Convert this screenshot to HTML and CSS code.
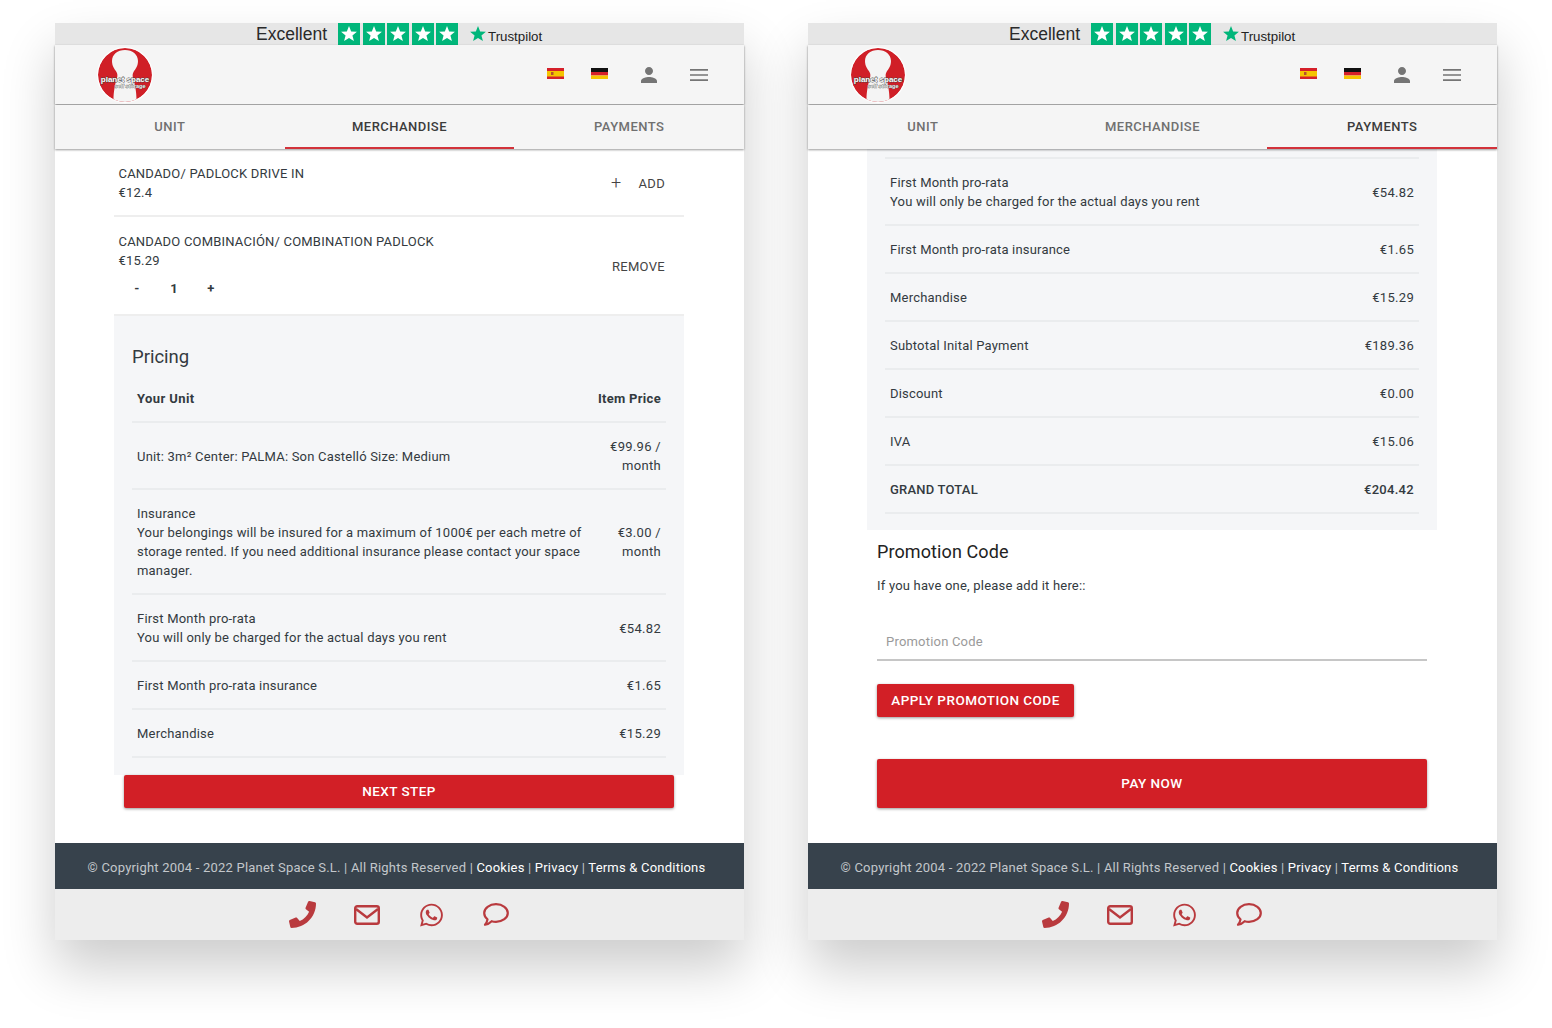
FILE: index.html
```html
<!DOCTYPE html>
<html lang="en">
<head>
    <meta charset="UTF-8">
    <meta name="viewport" content="width=device-width, initial-scale=1.0">
    <title>Planet Space checkout</title>
    <link rel="stylesheet" href="styles.css">
</head>
<body>

    <!-- Shared icons -->
    <svg class="sprite" aria-hidden="true">
        <symbol id="tp-star" viewBox="0 0 24 24"><polygon points="12,2.5 14.6,9 21.5,9.3 16.1,13.7 17.9,20.5 12,16.7 6.1,20.5 7.9,13.7 2.5,9.3 9.4,9"/></symbol>
        <symbol id="logo" viewBox="0 0 54 54">
            <circle cx="27" cy="27" r="27" fill="#d01f27"/>
            <path d="M27 2c7.500 0 13 4.500 13 11 0 5-2.500 8-4.500 11-1.500 2.500-1 5 .5 9 1 4 2.500 11 2.500 18.500-3.500 1.600-7.500 2.500-11.500 2.500s-8-.9-11.500-2.500c0-7.500 1.500-14.500 2.500-18.500 1.500-4 2-6.500 .5-9-2-3-4.500-6-4.500-11 0-6.500 5.500-11 13-11z" fill="#f4f4f4"/>
            <text class="logo-name" x="27" y="33.500" text-anchor="middle">planet space</text>
            <text class="logo-sub" x="32" y="40" text-anchor="middle">self storage</text>
        </symbol>
        <symbol id="flag-es" viewBox="0 0 17 11">
            <rect width="17" height="11" fill="#d5202a"/><rect y="3" width="17" height="5.500" fill="#f5c400"/><rect x="4" y="4" width="2.500" height="3" fill="#b5502a"/>
        </symbol>
        <symbol id="flag-de" viewBox="0 0 17 11">
            <rect width="17" height="4" fill="#111"/><rect y="4" width="17" height="3.500" fill="#d5202a"/><rect y="7.500" width="17" height="3.500" fill="#f5c400"/>
        </symbol>
        <symbol id="person" viewBox="0 0 24 24"><path d="M12 12c2.210 0 4-1.790 4-4s-1.790-4-4-4-4 1.790-4 4 1.790 4 4 4zm0 2c-2.670 0-8 1.340-8 4v2h16v-2c0-2.660-5.330-4-8-4z"/></symbol>
        <symbol id="menu" viewBox="0 0 24 24"><path d="M3 18h18v-1.700H3V18zm0-5.150h18v-1.700H3v1.700zM3 6v1.700h18V6H3z"/></symbol>
        <symbol id="phone" viewBox="0 0 512 512"><path d="M493.400 24.600l-104-24c-11.300-2.600-22.900 3.300-27.500 13.900l-48 112c-4.200 9.800-1.400 21.300 6.900 28l60.600 49.600c-36 76.700-98.900 140.500-177.200 177.200l-49.600-60.600c-6.800-8.300-18.200-11.100-28-6.900l-112 48C3.900 366.500-2 378.100.6 389.400l24 104C27.100 504.200 36.700 512 48 512c256.100 0 464-207.500 464-464 0-11.200-7.700-20.900-18.600-23.400z"/></symbol>
        <symbol id="mail" viewBox="0 0 26 20"><rect x="1.200" y="1.200" width="23.600" height="17.600" rx="2" fill="none" stroke="currentColor" stroke-width="2.400"/><path d="M2 4l11 8.500L24 4" fill="none" stroke="currentColor" stroke-width="2.400"/></symbol>
        <symbol id="whatsapp" viewBox="0 0 448 512"><path d="M380.900 97.100C339 55.100 283.200 32 223.900 32c-122.400 0-222 99.600-222 222 0 39.100 10.200 77.300 29.600 111L0 480l117.700-30.900c32.400 17.700 68.900 27 106.100 27h.1c122.300 0 224.100-99.600 224.100-222 0-59.300-25.200-115-67.100-157zm-157 341.600c-33.200 0-65.700-8.900-94-25.700l-6.700-4-69.800 18.300L72 359.200l-4.400-7c-18.500-29.400-28.200-63.300-28.200-98.200 0-101.700 82.800-184.500 184.600-184.500 49.300 0 95.600 19.200 130.400 54.100 34.800 34.900 56.200 81.200 56.100 130.500 0 101.800-84.900 184.600-186.600 184.600zm101.200-138.200c-5.500-2.800-32.800-16.200-37.900-18-5.100-1.900-8.800-2.800-12.500 2.800-3.700 5.600-14.300 18-17.600 21.800-3.200 3.700-6.500 4.200-12 1.400-32.600-16.300-54-29.100-75.500-66-5.700-9.800 5.700-9.100 16.300-30.300 1.800-3.700.9-6.900-.5-9.700-1.400-2.800-12.500-30.100-17.100-41.200-4.500-10.800-9.100-9.300-12.500-9.500-3.200-.2-6.900-.2-10.600-.2-3.700 0-9.700 1.400-14.800 6.900-5.100 5.600-19.400 19-19.400 46.300 0 27.300 19.900 53.700 22.600 57.400 2.800 3.700 39.100 59.700 94.800 83.800 35.200 15.200 49 16.500 66.600 13.900 10.700-1.600 32.800-13.400 37.400-26.400 4.600-13 4.600-24.100 3.200-26.400-1.300-2.500-5-3.900-10.500-6.600z"/></symbol>
        <symbol id="comment" viewBox="0 0 26 23"><path d="M13 1.200c6.600 0 11.800 3.900 11.800 8.800S19.600 18.800 13 18.800c-1.500 0-3-.2-4.300-.6-1.500 1.500-3.600 3-6.700 3.500 1.300-1.500 2.200-3.300 2.500-5.400C2.500 14.700 1.200 12.500 1.200 10 1.200 5.100 6.400 1.200 13 1.200z" fill="none" stroke="currentColor" stroke-width="2.200" stroke-linejoin="round"/></symbol>
    </svg>

    <div class="desktop">

        <!-- Merchandise step -->
        <section class="screen">
            <div class="trust-bar">
                <span class="trust-word">Excellent</span>
                <span class="trust-stars">
                    <span class="trust-box"><svg><use href="#tp-star"/></svg></span>
                    <span class="trust-box"><svg><use href="#tp-star"/></svg></span>
                    <span class="trust-box"><svg><use href="#tp-star"/></svg></span>
                    <span class="trust-box"><svg><use href="#tp-star"/></svg></span>
                    <span class="trust-box"><svg><use href="#tp-star"/></svg></span>
                </span>
                <span class="trust-brand"><svg class="trust-mark"><use href="#tp-star"/></svg>Trustpilot</span>
            </div>
            <header class="top-bar">
                <svg class="logo"><use href="#logo"/></svg>
                <div class="top-actions">
                    <span class="flag-btn"><svg class="flag"><use href="#flag-es"/></svg></span>
                    <span class="flag-btn"><svg class="flag"><use href="#flag-de"/></svg></span>
                    <span class="icon-btn first"><svg class="top-icon"><use href="#person"/></svg></span>
                    <span class="icon-btn"><svg class="top-icon"><use href="#menu"/></svg></span>
                </div>
            </header>
            <nav class="tabs">
                <span class="tab">UNIT</span>
                <span class="tab active">MERCHANDISE</span>
                <span class="tab">PAYMENTS</span>
            </nav>
            <main class="content">
                <div class="product">
                    <div>
                        <div>CANDADO/ PADLOCK DRIVE IN</div>
                        <div>€12.4</div>
                    </div>
                    <div class="product-action"><span class="plus">+</span>ADD</div>
                </div>
                <div class="product product-last">
                    <div>
                        <div>CANDADO COMBINACIÓN/ COMBINATION PADLOCK</div>
                        <div>€15.29</div>
                        <div class="qty"><span>-</span><span>1</span><span>+</span></div>
                    </div>
                    <div class="product-action">REMOVE</div>
                </div>
                <div class="pricing">
                    <h2 class="pricing-title">Pricing</h2>
                    <div class="price-row head"><div class="price-label">Your Unit</div><div class="price-value wide">Item Price</div></div>
                    <div class="price-row"><div class="price-label">Unit: 3m² Center: PALMA: Son Castelló Size: Medium</div><div class="price-value">€99.96 / month</div></div>
                    <div class="price-row"><div class="price-label">Insurance<br>Your belongings will be insured for a maximum of 1000€ per each metre of storage rented. If you need additional insurance please contact your space manager.</div><div class="price-value">€3.00 / month</div></div>
                    <div class="price-row"><div class="price-label">First Month pro-rata<br>You will only be charged for the actual days you rent</div><div class="price-value">€54.82</div></div>
                    <div class="price-row"><div class="price-label">First Month pro-rata insurance</div><div class="price-value">€1.65</div></div>
                    <div class="price-row"><div class="price-label">Merchandise</div><div class="price-value">€15.29</div></div>
                </div>
                <div class="next-wrap"><button class="btn btn-next">NEXT STEP</button></div>
            </main>
            <footer class="legal">© Copyright 2004 - 2022 Planet Space S.L. | All Rights Reserved | <a>Cookies</a> | <a>Privacy</a> | <a>Terms &amp; Conditions</a></footer>
            <div class="contact-bar">
                <span class="contact-item"><svg class="ic-phone"><use href="#phone"/></svg></span>
                <span class="contact-item"><svg class="ic-mail"><use href="#mail"/></svg></span>
                <span class="contact-item"><svg class="ic-whatsapp"><use href="#whatsapp"/></svg></span>
                <span class="contact-item"><svg class="ic-comment"><use href="#comment"/></svg></span>
            </div>
        </section>

        <!-- Payments step -->
        <section class="screen">
            <div class="trust-bar">
                <span class="trust-word">Excellent</span>
                <span class="trust-stars">
                    <span class="trust-box"><svg><use href="#tp-star"/></svg></span>
                    <span class="trust-box"><svg><use href="#tp-star"/></svg></span>
                    <span class="trust-box"><svg><use href="#tp-star"/></svg></span>
                    <span class="trust-box"><svg><use href="#tp-star"/></svg></span>
                    <span class="trust-box"><svg><use href="#tp-star"/></svg></span>
                </span>
                <span class="trust-brand"><svg class="trust-mark"><use href="#tp-star"/></svg>Trustpilot</span>
            </div>
            <header class="top-bar">
                <svg class="logo"><use href="#logo"/></svg>
                <div class="top-actions">
                    <span class="flag-btn"><svg class="flag"><use href="#flag-es"/></svg></span>
                    <span class="flag-btn"><svg class="flag"><use href="#flag-de"/></svg></span>
                    <span class="icon-btn first"><svg class="top-icon"><use href="#person"/></svg></span>
                    <span class="icon-btn"><svg class="top-icon"><use href="#menu"/></svg></span>
                </div>
            </header>
            <nav class="tabs">
                <span class="tab">UNIT</span>
                <span class="tab">MERCHANDISE</span>
                <span class="tab active">PAYMENTS</span>
            </nav>
            <main class="content">
                <div class="pricing pricing-scrolled">
                    <div class="price-row top-line"><div class="price-label">First Month pro-rata<br>You will only be charged for the actual days you rent</div><div class="price-value">€54.82</div></div>
                    <div class="price-row"><div class="price-label">First Month pro-rata insurance</div><div class="price-value">€1.65</div></div>
                    <div class="price-row"><div class="price-label">Merchandise</div><div class="price-value">€15.29</div></div>
                    <div class="price-row"><div class="price-label">Subtotal Inital Payment</div><div class="price-value">€189.36</div></div>
                    <div class="price-row"><div class="price-label">Discount</div><div class="price-value">€0.00</div></div>
                    <div class="price-row"><div class="price-label">IVA</div><div class="price-value">€15.06</div></div>
                    <div class="price-row total"><div class="price-label">GRAND TOTAL</div><div class="price-value">€204.42</div></div>
                </div>
                <div class="promo">
                    <h2 class="promo-title">Promotion Code</h2>
                    <p class="promo-text">If you have one, please add it here::</p>
                    <input class="promo-input" type="text" placeholder="Promotion Code">
                    <button class="btn btn-apply">APPLY PROMOTION CODE</button>
                    <button class="btn btn-pay">PAY NOW</button>
                </div>
            </main>
            <footer class="legal">© Copyright 2004 - 2022 Planet Space S.L. | All Rights Reserved | <a>Cookies</a> | <a>Privacy</a> | <a>Terms &amp; Conditions</a></footer>
            <div class="contact-bar">
                <span class="contact-item"><svg class="ic-phone"><use href="#phone"/></svg></span>
                <span class="contact-item"><svg class="ic-mail"><use href="#mail"/></svg></span>
                <span class="contact-item"><svg class="ic-whatsapp"><use href="#whatsapp"/></svg></span>
                <span class="contact-item"><svg class="ic-comment"><use href="#comment"/></svg></span>
            </div>
        </section>

    </div>

</body>
</html>
```

FILE: styles.css
```css
* {
    box-sizing: border-box;
}
html, body {
    height: 100%;
}
body {
    margin: 0;
    background: #fff;
    overflow: hidden;
    font-family: Roboto, "Liberation Sans", sans-serif;
    font-size: 13px;
    line-height: 19px;
    letter-spacing: 0.2px;
    color: #333a40;
}
.sprite {
    display: none;
}
.desktop {
    display: flex;
    gap: 64px;
    padding: 23px 55px;
}
.screen {
    width: 689px;
    height: 917px;
    display: flex;
    flex-direction: column;
    background: #fff;
    box-shadow: 0 28px 50px rgba(0, 0, 0, 0.2);
}

/* Trustpilot strip */
.trust-bar {
    height: 22px;
    flex: none;
    display: flex;
    align-items: center;
    padding-left: 201px;
    background: #e6e6e6;
    color: #222;
    letter-spacing: 0;
}
.trust-word {
    width: 82px;
    font-family: "Liberation Sans", sans-serif;
    font-size: 17.500px;
    line-height: 22px;
    color: #2a2a2a;
}
.trust-stars {
    display: flex;
    gap: 2.500px;
}
.trust-box {
    width: 22px;
    height: 22px;
    display: flex;
    align-items: center;
    justify-content: center;
    background: #00b67a;
}
.trust-box svg {
    width: 20px;
    height: 20px;
    fill: #fff;
}
.trust-brand {
    display: flex;
    align-items: center;
    margin-left: 10px;
    font-family: "Liberation Sans", sans-serif;
    font-size: 13.300px;
    padding-top: 4px;
}
.trust-mark {
    width: 20px;
    height: 20px;
    margin: -5px 0 0 0;
    fill: #00b67a;
}

/* Header */
.top-bar {
    height: 59px;
    flex: none;
    display: flex;
    align-items: center;
    justify-content: space-between;
    padding: 0 20px 0 43px;
    background: #f5f5f5;
    box-shadow: 0 1px 2px rgba(0, 0, 0, 0.5);
    position: relative;
}
.logo {
    width: 54px;
    height: 54px;
    border-radius: 50%;
    box-shadow: 0 0 1px 1px #fff;
}
.logo-name {
    font-family: "Liberation Sans", sans-serif;
    font-size: 8px;
    font-weight: 700;
    letter-spacing: 0;
    fill: #fff;
    stroke: #444;
    stroke-width: 0.8px;
    paint-order: stroke;
}
.logo-sub {
    font-family: "Liberation Sans", sans-serif;
    font-size: 5.500px;
    font-weight: 700;
    letter-spacing: 0;
    fill: #eee;
    stroke: #555;
    stroke-width: 0.5px;
    paint-order: stroke;
}
.top-actions {
    display: flex;
    align-items: center;
}
.flag-btn {
    width: 44px;
    display: flex;
    justify-content: center;
    margin-top: -3px;
}
.flag {
    width: 17px;
    height: 11px;
}
.icon-btn {
    width: 50px;
    display: flex;
    justify-content: center;
}
.icon-btn.first {
    margin-left: 3px;
}
.top-icon {
    width: 24px;
    height: 24px;
    fill: #757575;
}

/* Tabs */
.tabs {
    height: 44px;
    flex: none;
    display: flex;
    margin-top: 1px;
    background: #f5f5f5;
    box-shadow: 0 1px 2px rgba(0, 0, 0, 0.4);
    position: relative;
}
.tab {
    flex: 1;
    text-align: center;
    line-height: 43px;
    height: 44px;
    font-weight: 500;
    letter-spacing: 0.45px;
    color: #707070;
}
.tab.active {
    color: #3b3b3b;
    border-bottom: 2px solid #d2323a;
}

/* Main area */
.content {
    flex: 1;
    overflow: hidden;
    display: flex;
    flex-direction: column;
}
.product {
    display: flex;
    align-items: center;
    justify-content: space-between;
    margin: 0 60px 0 59px;
    padding: 15px 19px 13px 4.500px;
    border-bottom: 2px solid #eeeeee;
}
.product-last {
    padding-bottom: 16px;
}
.product-action {
    color: #444;
    letter-spacing: 0.3px;
}
.product-last .product-action {
    margin-top: 2px;
}
.plus {
    font-size: 18px;
    font-weight: 300;
    margin-right: 17px;
    vertical-align: -1px;
}
.qty {
    display: flex;
    margin-top: 9px;
    font-weight: 700;
}
.qty span {
    width: 37px;
    text-align: center;
}
.pricing {
    margin: 0 60px 0 59px;
    padding: 27px 18px 17px;
    background: #f5f6f8;
}
.pricing-title {
    margin: 0 0 4px;
    font-size: 18.500px;
    font-weight: 400;
    line-height: 28px;
    letter-spacing: 0;
}
.price-row {
    display: flex;
    align-items: center;
    padding: 14px 5px 13px;
    border-bottom: 2px solid #eaecee;
}
.price-row.head {
    font-weight: 700;
    letter-spacing: 0.4px;
}
.price-row.top-line {
    border-top: 2px solid #eaecee;
}
.price-row.total {
    font-weight: 500;
}
.price-label {
    flex: 1;
    padding-right: 12px;
}
.price-value {
    width: 60px;
    text-align: right;
    letter-spacing: 0.3px;
}
.price-value.wide {
    width: 80px;
}
.pricing-scrolled {
    padding: 8px 18px 16px;
}

/* Promo form */
.promo {
    padding: 0 70px 0 69px;
    display: flex;
    flex-direction: column;
    align-items: flex-start;
}
.promo-title {
    margin: 8px 0 0;
    font-size: 18px;
    font-weight: 400;
    line-height: 28px;
    letter-spacing: 0.1px;
    color: #222;
}
.promo-text {
    margin: 10px 0 0;
}
.promo-input {
    width: 100%;
    height: 36px;
    margin-top: 30px;
    padding: 0 9px 2px;
    border: 0;
    border-bottom: 2px solid #c6c6c6;
    background: transparent;
    font: inherit;
    letter-spacing: inherit;
}
.promo-input::placeholder {
    color: #9a9a9a;
}
.btn {
    border: 0;
    border-radius: 2px;
    padding: 0 0 2px;
    background: #d21f26;
    color: #fff;
    font-family: inherit;
    font-size: 13.500px;
    font-weight: 500;
    letter-spacing: 0.45px;
    box-shadow: 0 1px 3px rgba(0, 0, 0, 0.4);
}
.next-wrap {
    padding: 0 70px 0 69px;
}
.btn-next {
    width: 100%;
    height: 33px;
}
.btn-apply {
    width: 197px;
    height: 33px;
    margin-top: 23px;
}
.btn-pay {
    width: 100%;
    height: 49px;
    margin-top: 42px;
}

/* Footer */
.legal {
    height: 46px;
    flex: none;
    padding-right: 6px;
    text-align: center;
    line-height: 49px;
    background: #37424c;
    color: #c3c7cb;
    font-size: 13px;
    letter-spacing: 0.21px;
}
.legal a {
    color: #fff;
}
.contact-bar {
    height: 51px;
    flex: none;
    display: flex;
    align-items: center;
    justify-content: center;
    background: #ededed;
    color: #b93a3e;
}
.contact-item {
    width: 64.500px;
    display: flex;
    justify-content: center;
}
.contact-item svg {
    fill: currentColor;
}
.ic-phone {
    width: 27px;
    height: 27px;
}
.ic-mail {
    width: 26px;
    height: 20px;
}
.ic-whatsapp {
    width: 23px;
    height: 26px;
}
.ic-comment {
    width: 26px;
    height: 23px;
}
```
